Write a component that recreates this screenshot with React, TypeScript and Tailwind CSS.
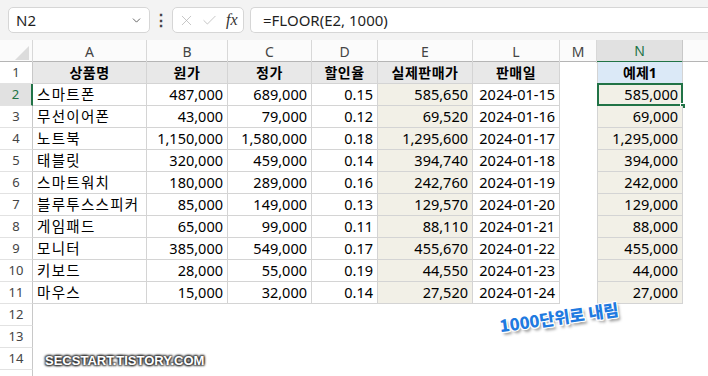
import { ChevronDown, X, Check } from "lucide-react";

const rows = [
  ["스마트폰", "487,000", "689,000", "0.15", "585,650", "2024-01-15", "585,000"],
  ["무선이어폰", "43,000", "79,000", "0.12", "69,520", "2024-01-16", "69,000"],
  ["노트북", "1,150,000", "1,580,000", "0.18", "1,295,600", "2024-01-17", "1,295,000"],
  ["태블릿", "320,000", "459,000", "0.14", "394,740", "2024-01-18", "394,000"],
  ["스마트워치", "180,000", "289,000", "0.16", "242,760", "2024-01-19", "242,000"],
  ["블루투스스피커", "85,000", "149,000", "0.13", "129,570", "2024-01-20", "129,000"],
  ["게임패드", "65,000", "99,000", "0.11", "88,110", "2024-01-21", "88,000"],
  ["모니터", "385,000", "549,000", "0.17", "455,670", "2024-01-22", "455,000"],
  ["키보드", "28,000", "55,000", "0.19", "44,550", "2024-01-23", "44,000"],
  ["마우스", "15,000", "32,000", "0.14", "27,520", "2024-01-24", "27,000"],
];

const cols = "grid grid-cols-[33px_114px_81px_84px_66px_95px_87px_37px_86px_25px]";
const cell = "h-[22px] flex items-center border-b border-r border-[#d4d4d4] px-1";
const rowHead = "h-[22px] flex items-center justify-center border-b border-r border-[#e2e2e2] border-r-[#c8c8c8] text-[13px] text-[#444]";

export default function App() {
  return (
    <div
      className="relative w-[708px] h-[376px] overflow-hidden bg-white text-black"
      style={{ fontFamily: '"Noto Sans", "Noto Sans CJK KR", sans-serif' }}
    >
      {/* formula bar */}
      <div className="h-[40px] bg-[#f3f3f3] flex items-start pt-[7px] pl-[8px]">
        <div className="w-[142px] h-[26px] bg-white rounded-[5px] border border-[#d6d6d6] flex items-center justify-between pl-[7px] pr-[6px]">
          <span className="text-[15px] text-[#1f1f1f]">N2</span>
          <ChevronDown size={13} strokeWidth={1.5} className="text-[#444]" />
        </div>
        <div className="h-[26px] w-[22px] flex items-center justify-center text-[#444] text-[16px] font-bold">⋮</div>
        <div className="w-[72px] h-[26px] bg-white rounded-[5px] border border-[#d6d6d6] flex items-center pl-[5px] gap-[6px]">
          <X size={17} strokeWidth={1} className="text-[#b0b0b0]" />
          <Check size={17} strokeWidth={1} className="text-[#b0b0b0]" />
          <span
            className="text-[16px] italic text-[#333] ml-[2px]"
            style={{ fontFamily: '"Liberation Serif", serif' }}
          >
            fx
          </span>
        </div>
        <div className="ml-[6px] flex-1 h-[26px] bg-white rounded-l-[5px] border border-r-0 border-[#d6d6d6] flex items-center pl-[12px]">
          <span className="text-[15px] text-[#1f1f1f]">=FLOOR(E2, 1000)</span>
        </div>
      </div>

      {/* column header */}
      <div className={`${cols} h-[22px] text-[14px] text-[#444] bg-[#fbfbfb] border-b border-[#b5b5b5]`}>
        <div className="border-r border-[#d8d8d8] flex items-end justify-end pr-[3px] pb-[3px]">
          <div className="w-0 h-0 border-l-[14px] border-l-transparent border-b-[14px] border-b-[#dcdcdc]" />
        </div>
        {["A", "B", "C", "D", "E", "L", "M"].map((c) => (
          <div key={c} className="border-r border-[#d8d8d8] flex items-center justify-center">
            {c}
          </div>
        ))}
        <div className="bg-[#e1e1e1] border-r border-[#c8c8c8] border-b-2 border-b-[#217346] flex items-center justify-center text-[#217346]">
          N
        </div>
        <div />
      </div>

      {/* row 1 */}
      <div className={`${cols} text-[14px]`}>
        <div className={rowHead}>1</div>
        {["상품명", "원가", "정가", "할인율", "실제판매가", "판매일"].map((h) => (
          <div key={h} className={`${cell} justify-center font-bold bg-[#e8e8e8] tracking-[0.5px]`}>
            {h}
          </div>
        ))}
        <div className="h-[22px]" />
        <div className={`${cell} border-l justify-center font-bold bg-[#dbe9f7]`}>예제1</div>
        <div />
      </div>

      {rows.map((r, i) => {
        const sel = i === 0;
        return (
          <div key={i} className={`${cols} text-[14.5px]`}>
            <div
              className={
                sel
                  ? "h-[22px] flex items-center justify-center border-b border-[#e2e2e2] border-r-2 border-r-[#217346] bg-[#e1e1e1] text-[13px] text-[#217346]"
                  : rowHead
              }
            >
              {i + 2}
            </div>
            <div className={`${cell} whitespace-nowrap tracking-[1.3px]`}>{r[0]}</div>
            <div className={`${cell} justify-end`}>{r[1]}</div>
            <div className={`${cell} justify-end`}>{r[2]}</div>
            <div className={`${cell} justify-end`}>{r[3]}</div>
            <div className={`${cell} justify-end bg-[#f2f0e7]`}>{r[4]}</div>
            <div className={`${cell} justify-end`}>{r[5]}</div>
            <div className="h-[22px]" />
            <div className={`${cell} border-l justify-end bg-[#f2f0e7] relative`}>
              {r[6]}
              {sel && (
                <>
                  <div className="absolute -left-[1px] -top-[1px] -right-[1px] -bottom-[1px] border-2 border-[#217346]" />
                  <div className="absolute -right-[4px] -bottom-[4px] w-[6px] h-[6px] bg-[#217346] border border-white" />
                </>
              )}
            </div>
            <div />
          </div>
        );
      })}

      {[12, 13, 14].map((n) => (
        <div key={n} className={cols}>
          <div className={rowHead}>{n}</div>
        </div>
      ))}
      <div className={cols}>
        <div className={rowHead} />
      </div>

      {/* annotation */}
      <div
        className="absolute left-[499px] top-[305px] text-[16.5px] font-black text-[#1f7ae0] -rotate-[8deg] whitespace-nowrap"
        style={{
          fontFamily: '"Noto Sans CJK KR", sans-serif',
          textShadow:
            "1px 0 0 #fff, -1px 0 0 #fff, 0 1px 0 #fff, 0 -1px 0 #fff, 1px 1px 0 #fff, -1px -1px 0 #fff, 1px -1px 0 #fff, -1px 1px 0 #fff, 2px 3px 3px rgba(0,0,0,0.45)",
        }}
      >
        1000단위로 내림
      </div>

      {/* watermark */}
      <div
        className="absolute left-[45px] top-[351px] text-[13px] font-bold text-white"
        style={{
          fontFamily: '"Liberation Sans", sans-serif',
          textShadow: "1px 1px 2px #333, -1px -1px 2px #333, 1px -1px 2px #333, -1px 1px 2px #333",
        }}
      >
        SECSTART.TISTORY.COM
      </div>
    </div>
  );
}
